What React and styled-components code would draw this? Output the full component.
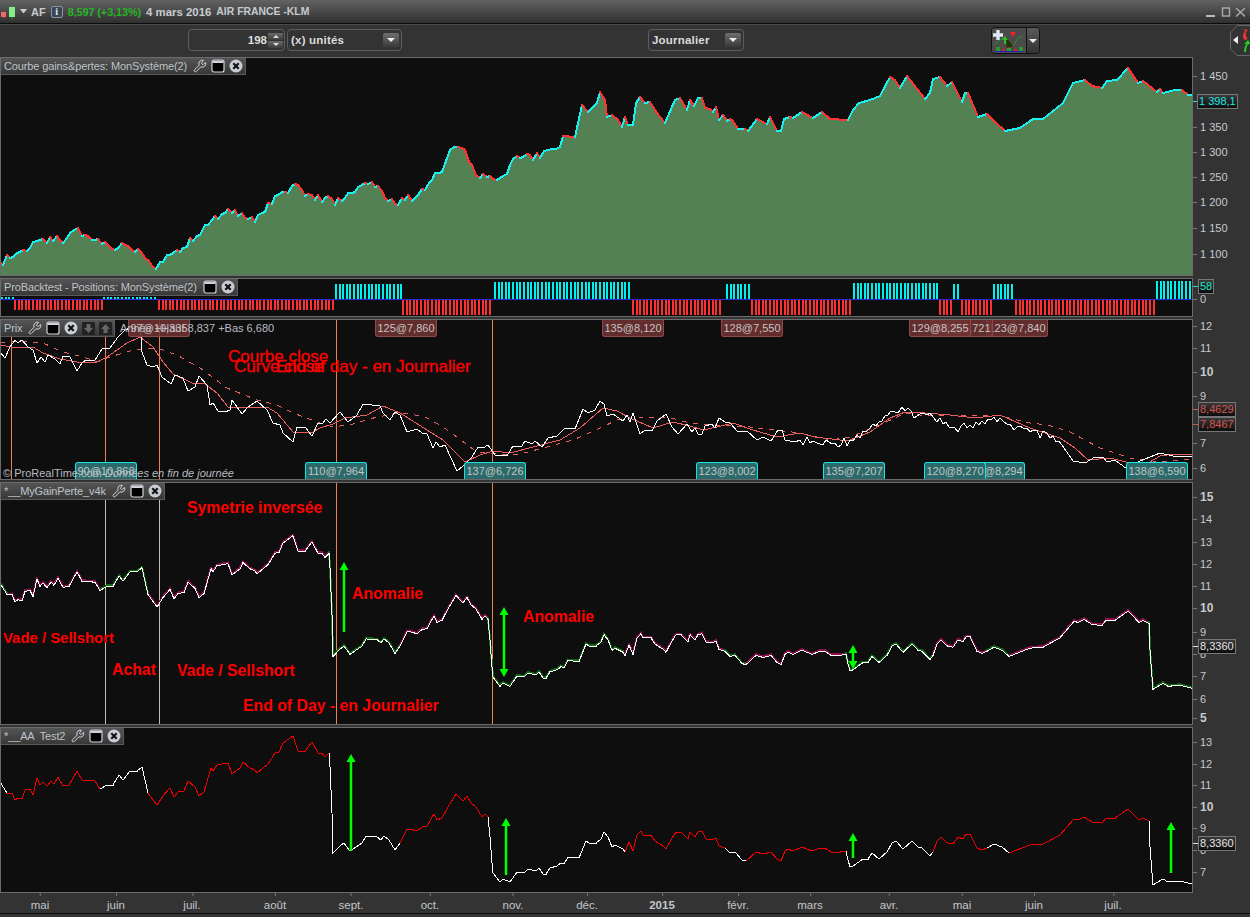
import React from "react";
import styled, { createGlobalStyle } from "styled-components";
import { Wrench } from "lucide-react";

const parse = (s) => s.trim().split(/\s+/).map((p) => p.split(",").map(Number));

// the reference curves are noisier than the points read off it, so fill in daily wiggle
const noise = (i) => {
  const v = Math.sin(i * 12.9898) * 43758.5453;
  return v - Math.floor(v) - 0.5;
};

const roughen = (pts, from, to, amp, step = 3.62) => {
  const out = [];
  let n = 0;
  pts.slice(1).forEach((p, i) => {
    const a = pts[i];
    out.push(a);
    if (a[0] < from || p[0] > to) return;
    const count = Math.floor((p[0] - a[0]) / step);
    for (let k = 1; k < count; k++) {
      const t = k / count;
      n += 1;
      out.push([Math.round(a[0] + (p[0] - a[0]) * t), Math.round(a[1] + (p[1] - a[1]) * t + noise(n) * amp)]);
    }
  });
  out.push(pts[pts.length - 1]);
  return out;
};

const EQUITY = roughen(parse(`0,262 10,258 20,252 30,248 40,240 50,237 60,240 70,233 78,228 85,235 95,240 105,242 115,250 125,245 135,252 145,258 152,266 160,262 170,255 180,252 190,238 200,235 205,225 215,216 225,213 235,210 245,218 255,222 265,212 275,196 285,192 295,184 305,196 315,200 325,198 335,205 345,198 355,192 365,183 375,187 385,198 395,204 405,200 415,198 425,190 432,180 442,172 450,150 458,147 465,150 472,165 480,178 490,176 500,178 510,165 520,158 530,155 540,158 548,150 556,149 560,147 563,136 575,137 582,105 588,112 597,103 600,92 605,100 607,117 612,115 618,120 622,127 625,117 628,125 633,125 636,103 640,97 645,103 650,102 657,113 665,123 675,100 680,98 687,110 690,100 694,106 698,98 702,98 705,108 710,109 713,112 716,107 719,120 723,115 727,121 730,119 733,121 738,129 745,129 748,131 757,119 763,122 767,124 770,117 777,131 781,131 784,119 790,117 793,118 802,112 813,118 822,112 830,119 848,120 853,110 859,103 870,100 880,96 890,77 895,80 900,88 907,76 925,99 930,93 933,79 940,77 947,86 952,82 962,102 965,93 968,93 978,117 987,114 993,120 1005,131 1020,128 1033,119 1043,119 1063,103 1073,83 1085,80 1092,86 1102,88 1107,81 1117,80 1128,68 1138,83 1143,81 1157,92 1160,89 1163,93 1175,90 1182,90 1188,95 1192,95`), 0, 560, 10, 3);

const PRICE = parse(`0,782 7,793 12,793 15,800 18,798 22,799 25,790 30,789 33,795 37,778 40,785 43,782 47,786 51,781 54,784 58,777 63,786 69,785 77,771 82,780 95,781 100,789 107,785 113,785 119,775 123,780 130,771 137,771 142,767 148,793 157,805 163,796 170,788 174,797 178,792 184,791 188,781 195,787 199,796 204,792 211,768 213,771 217,765 228,763 232,774 240,768 243,762 250,768 255,770 257,773 268,764 275,753 279,752 283,743 293,736 298,751 305,751 312,742 318,753 322,753 325,757 329,753 330,767 331,790 332,813 333,853 340,846 344,843 350,851 362,843 366,836 377,837 381,840 384,836 389,840 395,850 400,843 407,829 410,829 417,831 422,827 427,826 431,819 434,814 437,820 442,818 448,807 456,794 463,801 467,796 471,803 476,807 482,817 485,814 488,817 490,837 492,863 493,873 500,882 503,879 510,882 517,872 524,873 528,869 536,871 539,868 543,874 546,874 550,868 557,866 561,863 564,864 568,857 579,858 586,841 589,843 596,843 601,839 604,832 608,837 612,847 615,845 623,849 625,852 629,842 633,851 637,835 641,831 643,835 651,835 655,841 663,846 666,849 672,838 676,832 681,832 688,839 690,832 695,837 698,832 702,831 706,839 712,840 716,838 719,846 725,848 730,853 735,852 742,860 746,861 756,852 763,854 771,852 777,859 781,861 785,851 788,849 793,851 802,847 812,851 820,848 825,848 831,852 835,852 840,852 846,851 848,860 850,867 853,866 863,859 868,859 872,853 879,859 887,852 892,843 896,841 903,849 912,841 918,847 922,848 930,856 933,852 937,841 941,837 946,842 948,843 953,844 958,837 963,839 966,834 970,834 977,848 982,850 987,848 994,844 1002,847 1009,853 1017,850 1030,845 1043,844 1060,835 1074,819 1078,820 1084,817 1092,822 1102,823 1106,818 1115,818 1128,809 1139,820 1143,818 1149,821 1150,847 1153,885 1163,879 1168,882 1180,881 1192,884`);

const WHITE_RANGES = [[0, 5], [98, 152], [329, 398], [488, 625], [725, 746], [846, 933], [987, 1009], [1149, 1193]];

const DAILY = roughen(parse(`0,352 5,358 10,347 15,340 18,343 22,340 28,347 33,350 37,363 41,357 45,362 48,355 55,359 60,364 63,356 70,357 77,371 82,363 86,360 95,360 102,349 110,348 118,337 125,330 135,326 140,328 141,335 142,352 147,365 153,367 157,365 162,377 171,384 175,375 183,378 188,391 195,387 199,376 207,385 210,405 213,403 218,411 225,412 230,410 232,400 242,414 248,407 257,401 267,410 273,423 280,425 283,433 293,442 297,427 305,427 312,436 318,423 322,424 326,419 330,423 340,412 348,422 357,415 363,404 380,406 383,413 390,420 395,412 400,415 407,432 417,429 422,433 427,434 433,448 436,442 440,447 445,445 457,471 463,466 472,457 478,447 483,448 488,445 495,455 507,456 513,446 522,446 525,441 532,444 535,441 542,447 548,438 557,436 565,428 575,429 583,409 588,413 595,410 600,401 604,404 607,416 613,414 623,421 627,415 630,422 633,413 640,434 645,430 652,431 657,421 666,414 672,427 678,434 687,424 692,432 695,428 698,434 702,434 705,426 712,424 715,428 719,418 725,422 730,423 738,432 747,431 757,440 763,437 771,441 778,430 782,430 785,440 795,442 800,440 820,444 835,443 850,440 870,428 888,415 905,411 920,414 940,418 955,428 970,425 985,424 1000,418 1007,424 1030,432 1050,438 1062,445 1073,461 1085,463 1095,457 1103,457 1107,462 1115,460 1127,469 1140,461 1155,455 1160,453 1173,456 1192,457`), 800, 1062, 10, 3);

const MA_SOLID = parse(`0,345 12,347 33,347 43,353 60,359 77,362 95,363 107,357 127,343 140,337 153,347 163,362 173,374 192,383 205,384 217,393 228,407 267,407 277,413 293,432 313,432 320,428 333,424 345,418 367,415 383,406 400,413 443,440 465,462 480,455 493,451 510,453 533,447 560,440 580,428 603,408 617,411 630,418 653,428 673,422 690,426 703,430 717,427 733,423 753,430 777,437 800,433 815,437 840,440 850,440 870,432 890,418 905,412 925,413 950,415 975,418 1000,415 1030,428 1060,438 1075,448 1088,460 1110,458 1130,463 1150,462 1160,456 1175,454 1192,455`);

const MA_DASHED = parse(`0,343 17,341 43,343 63,352 83,357 97,362 110,357 133,350 157,348 177,355 200,368 227,388 257,400 277,405 293,413 320,423 333,427 353,424 377,417 400,413 423,416 440,425 457,437 477,452 500,454 517,455 543,448 573,440 600,428 617,420 640,417 667,417 690,423 717,425 750,427 800,433 830,440 850,437 880,425 905,413 920,415 960,415 1000,416 1030,423 1048,425 1070,432 1100,448 1130,458 1160,462 1192,459`);

const isWhite = (x) => WHITE_RANGES.some(([a, b]) => x >= a && x < b);
const toGainY = (y) => y - 200 + ((y - 742) * 4) / 130;

const BAR_STEP = 3.62;
// kind, first x, last x, far end of the bar (y)
const BAR_RANGES = [
  ["c", 1, 13, 297], ["r", 14, 102, 310], ["c", 103, 157, 297], ["r", 158, 334, 310], ["c", 335, 401, 284],
  ["r", 402, 492, 315], ["c", 494, 631, 282], ["r", 632, 723, 315], ["c", 726, 749, 284], ["r", 751, 851, 315],
  ["c", 853, 938, 283], ["r", 939, 952, 315], ["c", 953, 959, 284], ["r", 961, 991, 315], ["c", 993, 1014, 284],
  ["r", 1015, 1154, 315], ["c", 1156, 1190, 281],
];

const MONTHS = [
  ["mai", 40], ["juin", 116], ["juil.", 192], ["août", 275], ["sept.", 351], ["oct.", 430], ["nov.", 513],
  ["déc.", 587], ["2015", 662, true], ["févr.", 738], ["mars", 810], ["avr.", 889], ["mai", 962], ["juin", 1034], ["juil.", 1113],
];

const GlobalStyle = createGlobalStyle`
  html, body { margin: 0; padding: 0; background: #333; }
  body { font-family: "Liberation Sans", Arial, sans-serif; }
`;

const Page = styled.div`
  width: 1250px;
  height: 917px;
  overflow: hidden;
  background: #333;
  display: flex;
  flex-direction: column;
`;

const TitleBar = styled.div`
  height: 23px;
  flex: none;
  display: flex;
  align-items: center;
  background: linear-gradient(#626262, #2f2f2f);
  border-bottom: 1px solid #0a0a0a;
  font-size: 11px;
  font-weight: 700;
  color: #c6cbd0;
`;

const Ticker = styled.span`
  margin-right: 5px;
`;

const InfoBadge = styled.span`
  box-sizing: border-box;
  width: 12px;
  height: 12px;
  margin-right: 5px;
  border-radius: 2px;
  background: #3a4658;
  border: 1px solid #8a94a4;
  color: #e8e8e8;
  font-size: 10px;
  line-height: 10px;
  text-align: center;
  font-family: "Liberation Serif", serif;
`;

const Quote = styled.span`
  color: #27b327;
  margin-right: 5px;
  letter-spacing: -0.15px;
`;

const Meta = styled.span`
  margin-right: 5px;
  font-size: ${(p) => p.$size}px;
`;

const WindowButtons = styled.div`
  margin-left: auto;
  margin-right: 5px;
  display: flex;
`;

const Toolbar = styled.div`
  height: 33px;
  flex: none;
  box-sizing: border-box;
  padding: 4px 0 6px 188px;
  display: flex;
  align-items: stretch;
  background: #333;
  border-top: 1px solid #4a4a4a;
`;

const Field = styled.div`
  box-sizing: border-box;
  width: ${(p) => p.$w}px;
  margin-left: ${(p) => p.$ml || 0}px;
  border: 1px solid #5d5d5d;
  border-radius: 4px;
  display: flex;
  align-items: center;
  color: #dcdcdc;
  font-size: 11.5px;
  font-weight: 700;
`;

const SpinValue = styled.span`
  flex: 1;
  text-align: right;
  padding-right: 1px;
`;

const Spinner = styled.div`
  width: 15px;
  margin-right: 1px;
  display: flex;
  flex-direction: column;
  gap: 1px;
`;

const SpinPart = styled.div`
  height: 7px;
  background: linear-gradient(#6a6a6a, #3c3c3c);
  display: flex;
  align-items: center;
  justify-content: center;
  &::after {
    content: "";
    border-left: 3px solid transparent;
    border-right: 3px solid transparent;
    ${(p) => (p.$up ? "border-bottom: 3px solid #ddd;" : "border-top: 3px solid #ddd;")}
  }
`;

const SelectText = styled.span`
  flex: 1;
  padding-left: 3px;
  letter-spacing: 0.2px;
`;

const SelectArrow = styled.div`
  width: 16px;
  height: 14px;
  margin-right: 2px;
  border-radius: 2px;
  background: linear-gradient(#6e6e6e, #3a3a3a);
  display: flex;
  align-items: center;
  justify-content: center;
  &::after {
    content: "";
    border-left: 4px solid transparent;
    border-right: 4px solid transparent;
    border-top: 4px solid #eee;
  }
`;

const ToolGroup = styled.div`
  margin-left: 247px;
  margin-top: -2px;
  width: 49px;
  height: 27px;
  display: flex;
  border: 1px solid #111;
  border-radius: 4px;
  box-sizing: border-box;
  overflow: hidden;
`;

const ToolIcon = styled.div`
  width: 34px;
  background: #4b4b4b;
  border-right: 1px solid #111;
`;

const ToolDrop = styled.div`
  flex: 1;
  background: linear-gradient(#5a5a5a, #333);
  display: flex;
  align-items: center;
  justify-content: center;
  &::after {
    content: "";
    border-left: 4px solid transparent;
    border-right: 4px solid transparent;
    border-top: 4px solid #eee;
  }
`;

const SideHandle = styled.svg`
  margin-left: auto;
  margin-top: -4px;
`;

const Charts = styled.div`
  display: flex;
  flex-direction: column;
  gap: 2px;
  flex: none;
`;

const Row = styled.div`
  display: flex;
  height: ${(p) => p.$h}px;
`;

const Panel = styled.div`
  position: relative;
  width: 1193px;
  flex: none;
  background: #0e0e0e;
  overflow: hidden;
  &::after {
    content: "";
    position: absolute;
    inset: 0;
    border: 1px solid #6b6b6b;
    pointer-events: none;
    z-index: 5;
  }
  svg.plot {
    display: block;
  }
`;

const Legend = styled.div`
  position: absolute;
  left: 1px;
  top: 1px;
  height: 17px;
  box-sizing: border-box;
  padding: 0 2px 0 3px;
  display: flex;
  align-items: center;
  gap: 4px;
  background: linear-gradient(#555, #383838);
  border: 1px solid #5a5a5a;
  border-width: 0 1px 1px 0;
  color: #bfc3c8;
  font-size: 11px;
  z-index: 3;
  white-space: pre;
`;

const LegendName = styled.span`
  margin-right: 2px;
  letter-spacing: -0.12px;
`;

const HeadInfo = styled.span`
  position: absolute;
  left: 120px;
  top: 3px;
  color: #b8bcc2;
  font-size: 11px;
  white-space: nowrap;
  z-index: 3;
`;

const Copyright = styled.span`
  position: absolute;
  left: 3px;
  bottom: 0;
  color: #b8bcc2;
  font-size: 11px;
  line-height: 14px;
  white-space: nowrap;
  z-index: 3;
  em {
    font-style: italic;
  }
`;

const Tag = styled.div`
  position: absolute;
  width: 62px;
  height: 17px;
  box-sizing: border-box;
  text-align: center;
  font-size: 11px;
  line-height: 16px;
  color: #c4c4c4;
  z-index: 2;
  white-space: nowrap;
  ${(p) =>
    p.$sell
      ? `top: 1px; background: rgba(112,50,50,.88); border: 1px solid #8d4a4a; border-top: 0; border-radius: 0 0 3px 3px;`
      : `bottom: 0; height: 18px; background: #2a6a6a; border: 1px solid #17e4e4; border-bottom: 0; border-radius: 3px 3px 0 0;`}
`;

const Note = styled.span`
  position: absolute;
  color: #f00;
  white-space: nowrap;
  z-index: 2;
  font-size: ${(p) => p.$size || 15.8}px;
  font-weight: ${(p) => (p.$thin ? 400 : 700)};
  -webkit-text-stroke: ${(p) => (p.$thin ? "0.3px #f00" : "0")};
  line-height: 16px;
`;

const Axis = styled.div`
  position: relative;
  flex: 1;
  color: #c6cacc;
  font-size: 11px;
`;

const Mark = styled.span`
  position: absolute;
  left: 7px;
  line-height: 14px;
  transform: translateY(-7px);
  white-space: nowrap;
  font-weight: ${(p) => (p.$bold ? 700 : 400)};
  font-size: ${(p) => (p.$bold ? 12 : 11)}px;
  &::before {
    content: "";
    position: absolute;
    left: -7px;
    top: 7px;
    width: 4px;
    height: 1px;
    background: #777;
  }
`;

const ValueBox = styled.span`
  position: absolute;
  left: 5px;
  height: 15px;
  box-sizing: border-box;
  padding: 0 1px;
  transform: translateY(-8px);
  border: 1px solid #777;
  background: linear-gradient(#3a3a3a, #0c0c0c);
  color: ${(p) => p.$color};
  font-size: 11px;
  line-height: 13px;
  white-space: nowrap;
  z-index: 2;
  &::before {
    content: "";
    position: absolute;
    left: -6px;
    top: 6px;
    width: 5px;
    height: 1px;
    background: ${(p) => p.$color};
  }
`;

const DateAxis = styled.div`
  position: relative;
  height: 20px;
  flex: none;
  border-bottom: 1px solid #0a0a0a;
  box-sizing: content-box;
`;

const DateLabel = styled.span`
  position: absolute;
  top: 5px;
  transform: translateX(-50%);
  color: #c2c6cc;
  font-size: 11.5px;
  line-height: 14px;
  font-weight: ${(p) => (p.$bold ? 700 : 400)};
  &::before {
    content: "";
    position: absolute;
    left: 50%;
    top: -5px;
    width: 1px;
    height: 3px;
    background: #777;
  }
`;

const WindowIcon = () => (
  <svg width="14" height="14" viewBox="0 0 14 14">
    <rect x="1" y="1" width="12" height="12" rx="2" fill="#000" stroke="#cfd3da" strokeWidth="1.2" />
    <rect x="1.5" y="1.5" width="11" height="2.5" fill="#cfd3da" />
  </svg>
);

const CloseIcon = () => (
  <svg width="14" height="14" viewBox="0 0 14 14">
    <circle cx="7" cy="7" r="6.5" fill="#c9ccd4" />
    <path d="M4.3 4.3l5.4 5.4M9.7 4.3l-5.4 5.4" stroke="#111" strokeWidth="2.2" />
  </svg>
);

const MoveIcon = ({ up }) => (
  <svg width="13" height="13" viewBox="0 0 13 13">
    <rect width="13" height="13" rx="1" fill="#222" />
    <path d={up ? "M6.5 2L11 7H8.5v4h-4V7H2z" : "M6.5 11L11 6H8.5V2h-4v4H2z"} fill="#666" />
  </svg>
);

const LegendBar = ({ name, move }) => (
  <Legend>
    <LegendName>{name}</LegendName>
    <Wrench size={14} color="#dfe3ea" strokeWidth={1.6} />
    <WindowIcon />
    <CloseIcon />
    {move && <MoveIcon />}
    {move && <MoveIcon up />}
  </Legend>
);

const Plot = ({ top, h, children }) => (
  <svg className="plot" width="1193" height={h} viewBox={`0 ${top} 1193 ${h}`}>
    {children}
  </svg>
);

const Poly = ({ pts, ...rest }) => (
  <polyline points={pts.map((p) => p.join(",")).join(" ")} fill="none" {...rest} />
);

// one line per segment, since the colour changes along the curve
const Segments = ({ pts, colorOf, width = 1, dy = 0 }) =>
  pts.slice(1).map((p, i) => (
    <line
      key={i}
      x1={pts[i][0]}
      y1={pts[i][1] + dy}
      x2={p[0]}
      y2={p[1] + dy}
      stroke={colorOf(pts[i], p)}
      strokeWidth={width}
      strokeLinecap="square"
    />
  ));

const Arrow = ({ x, y1, y2, both }) => (
  <g fill="#0f0">
    <line x1={x} y1={y1 + 6} x2={x} y2={both ? y2 - 6 : y2} stroke="#0f0" strokeWidth="2.5" />
    <path d={`M${x} ${y1}l4.5 8h-9z`} />
    {both && <path d={`M${x} ${y2}l4.5 -8h-9z`} />}
  </g>
);

const VLine = ({ x, top, h, color }) => <line x1={x + 0.5} x2={x + 0.5} y1={top} y2={top + h} stroke={color} />;

// rising stretches are cyan, falling ones red
const equityColor = (a, b) => (b[1] > a[1] ? "#ff3333" : "#19f0f0");

const Bars = () => {
  const out = [];
  BAR_RANGES.forEach(([kind, from, to, end]) => {
    const n = Math.round((to - from + 1) / BAR_STEP);
    for (let i = 0; i < n; i++) {
      const x = Math.round(from + i * BAR_STEP);
      out.push(
        kind === "c" ? (
          <rect key={kind + from + i} x={x} y={end} width={2} height={299 - end} fill="#00f0f0" />
        ) : (
          <rect key={kind + from + i} x={x} y={300} width={2} height={end - 300} fill="#ff3030" />
        )
      );
    }
  });
  return out;
};

const panelAxis = (top, marks) =>
  marks.map(([text, y, bold]) => (
    <Mark key={text} $bold={bold} style={{ top: y - top }}>
      {text}
    </Mark>
  ));

export default function App() {
  const gain = PRICE.map(([x, y]) => [x, toGainY(y)]);
  const whiteOr = (other) => (a, b) => (isWhite((a[0] + b[0]) / 2) ? "#fff" : other);
  const gainOverlay = (a, b) => (isWhite((a[0] + b[0]) / 2) ? "#0d6a12" : "#8c0f4e");

  return (
    <Page>
      <GlobalStyle />
      <TitleBar>
        <svg width="18" height="23" viewBox="0 0 18 23">
          <line x1="4" x2="4" y1="10" y2="19" stroke="#a33" />
          <rect x="1" y="12" width="5" height="5" fill="#ee6a6a" />
          <line x1="12" x2="12" y1="4" y2="20" stroke="#2a8a2a" />
          <rect x="9" y="7" width="6" height="10" fill="#86ec86" />
        </svg>
        <svg width="13" height="8" viewBox="0 0 13 8">
          <path d="M2 1h7L5.5 5.5z" fill="#ccc" />
        </svg>
        <Ticker>AF</Ticker>
        <InfoBadge>i</InfoBadge>
        <Quote>8,597 (+3,13%)</Quote>
        <Meta $size={11.4}>4 mars 2016</Meta>
        <Meta $size={10.4}>AIR FRANCE -KLM</Meta>
        <WindowButtons>
          <svg width="39" height="10" viewBox="0 0 39 10">
            <rect x="0" y="8" width="9" height="2" fill="#bbb" />
            <rect x="16.5" y="1" width="7" height="8" fill="none" stroke="#aaa" strokeWidth="1.4" />
            <path d="M30 1l9 8.5M39 1l-9 8.5" stroke="#aaa" strokeWidth="1.4" />
          </svg>
        </WindowButtons>
      </TitleBar>

      <Toolbar>
        <Field $w={97}>
          <SpinValue>198</SpinValue>
          <Spinner>
            <SpinPart $up />
            <SpinPart />
          </Spinner>
        </Field>
        <Field $w={115} $ml={2}>
          <SelectText>(x) unités</SelectText>
          <SelectArrow />
        </Field>
        <Field $w={96} $ml={246}>
          <SelectText>Journalier</SelectText>
          <SelectArrow />
        </Field>
        <ToolGroup>
          <ToolIcon>
            <svg width="33" height="25" viewBox="0 0 33 25">
              <path d="M6 2v10M1 7h10" stroke="#dfe6f5" strokeWidth="3.4" />
              <path d="M2 17l6-5 5-3 8 10 5-9 5-2" stroke="#2f8f2f" fill="none" />
              <path d="M14 20V8l8 11z" fill="#123c12" stroke="#a33" strokeWidth=".6" />
              <path d="M18 4l6 0-3 5z" fill="#e22" />
              <path d="M10 12l3-4 3 4h-2v4h-2v-4z" fill="#2ac02a" />
              <rect x="4" y="19" width="4" height="4" fill="#2a9a2a" />
              <rect x="10" y="21" width="3" height="2" fill="#d22" />
              <rect x="15" y="20" width="4" height="3" fill="#2a9a2a" />
              <rect x="22" y="21" width="3" height="2" fill="#d22" />
              <rect x="27" y="19" width="4" height="4" fill="#2a9a2a" />
              <rect x="2" y="23" width="29" height="1" fill="#22c" />
            </svg>
          </ToolIcon>
          <ToolDrop />
        </ToolGroup>
        <SideHandle width="20" height="31" viewBox="0 0 20 31">
          <path d="M20 .5H7L.5 8v16L7 30.5h13" fill="none" stroke="#666" />
          <path d="M3 15l5-4v8z" fill="#eee" />
          <path d="M15 15c-3-2-3-6 0-8l-1-3 4 1-1 1c-2 2-1 6 1 8z" fill="#e33" />
          <path d="M14 27c0-4 1-7 3-8h-3l4-4 3 4h-2c-2 1-3 4-3 8z" fill="#2c2" />
        </SideHandle>
      </Toolbar>

      <Charts>
        <Row $h={219}>
          <Panel>
            <Plot top={57} h={219}>
              <polygon
                points={`0,276 ${EQUITY.map((p) => p.join(",")).join(" ")} 1193,95 1193,276`}
                fill="#538153"
              />
              <g shapeRendering="crispEdges">
                <Segments pts={EQUITY} colorOf={equityColor} width={2} />
              </g>
            </Plot>
            <LegendBar name="Courbe gains&pertes: MonSystème(2)" />
          </Panel>
          <Axis>
            {panelAxis(57, [
              ["1 450", 76], ["1 350", 127], ["1 300", 152], ["1 250", 177], ["1 200", 202], ["1 150", 228], ["1 100", 254],
            ])}
            <ValueBox $color="#19e6e6" style={{ top: 102 - 57, left: 4 }}>1 398,1</ValueBox>
          </Axis>
        </Row>

        <Row $h={39}>
          <Panel>
            <Plot top={278} h={39}>
              <g shapeRendering="crispEdges">
                <Bars />
                <line x1="0" x2="1193" y1="299.5" y2="299.5" stroke="#2a2ae0" />
              </g>
            </Plot>
            <Legend>
              <LegendName>ProBacktest - Positions: MonSystème(2)</LegendName>
              <WindowIcon />
              <CloseIcon />
            </Legend>
          </Panel>
          <Axis>
            {panelAxis(278, [["0", 299]])}
            <ValueBox $color="#19e6c6" style={{ top: 287 - 278 }}>58</ValueBox>
          </Axis>
        </Row>

        <Row $h={161}>
          <Panel>
            <Plot top={319} h={161}>
              {[11, 105, 159, 336, 492].map((x) => (
                <VLine key={x} x={x} top={319} h={161} color="#f08050" />
              ))}
              <g shapeRendering="crispEdges">
                <Poly pts={MA_DASHED} stroke="#e86060" strokeDasharray="5 6" />
                <Poly pts={MA_SOLID} stroke="#e86060" />
                <Poly pts={DAILY} stroke="#fff" />
              </g>
            </Plot>
            <LegendBar name="Prix" move />
            <HeadInfo>Année +Haut 8,837 +Bas 6,680</HeadInfo>
            <Tag $sell style={{ left: 128 }}>97@10,335</Tag>
            <Tag $sell style={{ left: 375 }}>125@7,860</Tag>
            <Tag $sell style={{ left: 602 }}>135@8,120</Tag>
            <Tag $sell style={{ left: 721 }}>128@7,550</Tag>
            <Tag $sell style={{ left: 986 }}>123@7,840</Tag>
            <Tag $sell style={{ left: 931 }}>128@7,721</Tag>
            <Tag $sell style={{ left: 909 }}>129@8,255</Tag>
            <Note $thin $size={17} style={{ left: 228, top: 30 }}>Courbe close</Note>
            <Note $thin $size={17} style={{ left: 234, top: 40 }}>Curve close</Note>
            <Note $thin $size={17} style={{ left: 276, top: 40 }}>End of day - en Journalier</Note>
            <Tag style={{ left: 75 }}>90@10,868</Tag>
            <Tag style={{ left: 305 }}>110@7,964</Tag>
            <Tag style={{ left: 464 }}>137@6,726</Tag>
            <Tag style={{ left: 696 }}>123@8,002</Tag>
            <Tag style={{ left: 823 }}>135@7,207</Tag>
            <Tag style={{ left: 963 }}>120@8,294</Tag>
            <Tag style={{ left: 924 }}>120@8,270</Tag>
            <Tag style={{ left: 1126 }}>138@6,590</Tag>
            <Copyright>© ProRealTime.com <em>Données en fin de journée</em></Copyright>
          </Panel>
          <Axis>
            {panelAxis(319, [
              ["12", 326], ["11", 348], ["10", 372, true], ["9", 396], ["7", 443], ["6", 468],
            ])}
            <ValueBox $color="#d9534f" style={{ top: 410 - 319 }}>8,4629</ValueBox>
            <ValueBox $color="#d9534f" style={{ top: 425 - 319 }}>7,8467</ValueBox>
          </Axis>
        </Row>

        <Row $h={243}>
          <Panel>
            <Plot top={482} h={243}>
              {[105, 159].map((x) => (
                <VLine key={x} x={x} top={482} h={243} color="#c8b8a8" />
              ))}
              {[336, 492].map((x) => (
                <VLine key={x} x={x} top={482} h={243} color="#f08050" />
              ))}
              <g shapeRendering="crispEdges">
                <Segments pts={gain} colorOf={gainOverlay} width={2} dy={-1} />
                <Segments pts={gain} colorOf={() => "#fff"} />
              </g>
              <Arrow x={344} y1={562} y2={632} />
              <Arrow x={504} y1={607} y2={677} both />
              <Arrow x={853} y1={645} y2={669} both />
            </Plot>
            <LegendBar name="*__MyGainPerte_v4k" />
            <Note style={{ left: 187, top: 18 }}>Symetrie inversée</Note>
            <Note style={{ left: 352, top: 104 }}>Anomalie</Note>
            <Note style={{ left: 523, top: 127 }}>Anomalie</Note>
            <Note $size={14.9} style={{ left: 3, top: 148 }}>Vade / Sellshort</Note>
            <Note style={{ left: 112, top: 180 }}>Achat</Note>
            <Note style={{ left: 177, top: 181 }}>Vade / Sellshort</Note>
            <Note style={{ left: 243, top: 216 }}>End of Day - en Journalier</Note>
          </Panel>
          <Axis>
            {panelAxis(482, [
              ["15", 497, true], ["14", 519], ["13", 542], ["12", 564], ["11", 586], ["10", 608, true], ["9", 632], ["8", 654], ["7", 676], ["6", 699], ["5", 718, true],
            ])}
            <ValueBox $color="#e4e4e4" style={{ top: 647 - 482 }}>8,3360</ValueBox>
          </Axis>
        </Row>

        <Row $h={166}>
          <Panel>
            <Plot top={727} h={166}>
              <g shapeRendering="crispEdges">
                <Segments pts={PRICE} colorOf={whiteOr("#f00000")} />
              </g>
              <Arrow x={351} y1={754} y2={851} />
              <Arrow x={506} y1={818} y2={875} />
              <Arrow x={853} y1={833} y2={858} />
              <Arrow x={1171} y1={822} y2={873} />
            </Plot>
            <LegendBar name="*__AA  Test2" />
          </Panel>
          <Axis>
            {panelAxis(727, [
              ["13", 742], ["12", 764], ["11", 785], ["10", 807, true], ["9", 828], ["8", 850], ["7", 872],
            ])}
            <ValueBox $color="#e4e4e4" style={{ top: 844 - 727 }}>8,3360</ValueBox>
          </Axis>
        </Row>
      </Charts>

      <DateAxis>
        {MONTHS.map(([label, x, bold]) => (
          <DateLabel key={label + x} $bold={bold} style={{ left: x }}>
            {label}
          </DateLabel>
        ))}
      </DateAxis>
    </Page>
  );
}
